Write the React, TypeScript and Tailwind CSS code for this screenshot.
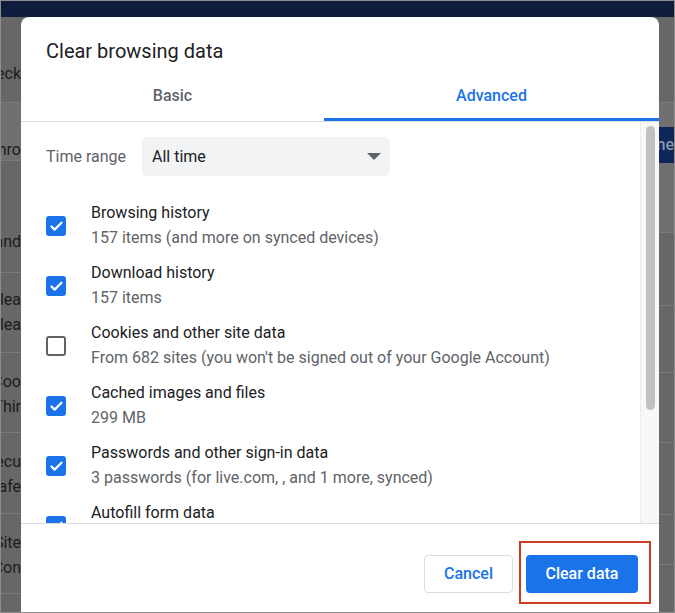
import {Check} from "lucide-react"

const items = [
    {label: "Browsing history", sub: "157 items (and more on synced devices)", checked: true},
    {label: "Download history", sub: "157 items", checked: true},
    {label: "Cookies and other site data", sub: "From 682 sites (you won't be signed out of your Google Account)", checked: false},
    {label: "Cached images and files", sub: "299 MB", checked: true},
    {label: "Passwords and other sign-in data", sub: "3 passwords (for live.com, , and 1 more, synced)", checked: true},
    {label: "Autofill form data", sub: "", checked: true},
]

// tails of the page text that peek out left of the dialog
const leftRows = [
    {h: "h-[86px]", lines: ["Check"], top: "pt-[44px]"},
    {h: "h-[58px]", lines: ["Chro"], top: "pt-[34px]", light: true},
    {h: "h-[112px]", lines: ["and"], top: "pt-[68px]"},
    {h: "h-[80px]", lines: ["Clea", "Clea"], top: "pt-[14px]"},
    {h: "h-[80px]", lines: ["Coo", "Thir"], top: "pt-[16px]"},
    {h: "h-[81px]", lines: ["Secu", "Safe"], top: "pt-[16px]"},
    {h: "h-[80px]", lines: ["Site", "Con"], top: "pt-[16px]"},
]

function Box({checked}: {checked: boolean}) {
    if (checked) {
        return (
            <div className="flex h-[20px] w-[20px] shrink-0 items-center justify-center rounded-[3px] bg-[#1a73e8]">
                <Check className="h-[15px] w-[15px] text-white" strokeWidth={3.5} />
            </div>
        )
    }
    return <div className="h-[20px] w-[20px] shrink-0 rounded-[3px] border-2 border-[#5f6368]" />
}

export default function App() {
    return (
        <div
            className="relative h-[613px] w-[675px] overflow-hidden border border-[#8d8d8d] bg-[#676767]"
            style={{fontFamily: "Roboto, 'Liberation Sans', sans-serif"}}
        >
            {/* dimmed page underneath */}
            <div className="h-[16px] bg-[#0f1c3e]" />
            <div className="flex">
                <div className="w-[20px] overflow-hidden">
                    {leftRows.map((r, i) => (
                        <div
                            key={i}
                            className={`${r.h} ${r.top} border-b border-[#7a7a7a] ${r.light ? "bg-[#707070]" : ""}`}
                        >
                            {r.lines.map((l, j) => (
                                <div key={j} className="flex h-[25px] justify-end whitespace-nowrap text-[16px] leading-[25px] text-[#1c1c1c]">
                                    {l}
                                </div>
                            ))}
                        </div>
                    ))}
                </div>
                <div className="flex-1" />
                <div className="w-[15px] overflow-hidden">
                    <div className="h-[86px] border-b border-[#7a7a7a]" />
                    <div className="h-[24px] bg-[#707070]" />
                    <div className="flex h-[36px] justify-end bg-[#0e2758] text-[16px] font-medium leading-[36px] text-[#8796ad]">
                        <span className="whitespace-nowrap">Done</span>
                    </div>
                    <div className="h-[70px] border-b border-[#7a7a7a] bg-[#707070]" />
                    <div className="h-[73px] border-b border-[#7a7a7a]" />
                    <div className="h-[67px] border-b border-[#7a7a7a]" />
                    <div className="h-[70px] border-b border-[#7a7a7a]" />
                    <div className="h-[72px] border-b border-[#7a7a7a]" />
                    <div className="h-[50px] border-b border-[#7a7a7a]" />
                </div>
            </div>

            {/* dialog */}
            <div className="absolute left-[20px] top-[16px] flex h-[620px] w-[638px] flex-col rounded-t-[8px] bg-white">
                <div className="px-[25px] pt-[22px] text-[20px] leading-[24px] text-[#202124]">Clear browsing data</div>

                <div className="mt-[7px] flex border-b border-[#dadce0]">
                    <div className="flex h-[51px] w-[303px] items-center justify-center pb-[3px] pt-[4px] text-[16px] font-medium text-[#5f6368]">
                        Basic
                    </div>
                    <div className="flex h-[51px] flex-1 items-center justify-center border-b-[3px] border-[#1a73e8] pt-[4px] text-[16px] font-medium text-[#1a73e8]">
                        Advanced
                    </div>
                </div>

                <div className="flex h-[401px]">
                    <div className="flex-1 overflow-hidden px-[25px] pt-[15px]">
                        <div className="flex items-center">
                            <span className="w-[96px] text-[16px] text-[#5f6368]">Time range</span>
                            <div className="flex h-[39px] w-[248px] items-center justify-between rounded-[5px] bg-[#f1f3f4] pl-[10px] pr-[9px] text-[16px] text-[#202124]">
                                All time
                                <svg width="14" height="7" viewBox="0 0 14 7">
                                    <path d="M0 0 L14 0 L7 7 Z" fill="#5f6368" />
                                </svg>
                            </div>
                        </div>

                        <div className="mt-[25px] flex flex-col gap-[10px]">
                            {items.map((it) => (
                                <div key={it.label} className="flex items-center gap-[25px]">
                                    <Box checked={it.checked} />
                                    <div className="flex h-[50px] flex-col">
                                        <span className="text-[16px] leading-[24px] text-[#202124]">{it.label}</span>
                                        <span className="text-[16px] leading-[26px] text-[#5f6368]">{it.sub}</span>
                                    </div>
                                </div>
                            ))}
                        </div>
                    </div>
                    <div className="flex w-[19px] justify-center border-l border-[#ececec] bg-[#f8f8f8] pt-[4px]">
                        <div className="h-[284px] w-[9px] rounded-full bg-[#c1c1c1]" />
                    </div>
                </div>

                <div className="flex justify-end gap-[13px] border-t border-[#dadce0] pr-[21px] pt-[31px]">
                    <button className="h-[38px] w-[89px] rounded-[4px] border border-[#dadce0] bg-white text-[16px] font-medium text-[#1a73e8]">
                        Cancel
                    </button>
                    <div className="relative">
                        <button className="h-[38px] w-[112px] rounded-[4px] bg-[#1a73e8] text-[16px] font-medium text-white">
                            Clear data
                        </button>
                        {/* annotation frame */}
                        <div className="absolute -bottom-[11px] -left-[7px] -right-[13px] -top-[14px] border-[2.5px] border-[#cf3a24]" />
                    </div>
                </div>
            </div>
        </div>
    )
}
